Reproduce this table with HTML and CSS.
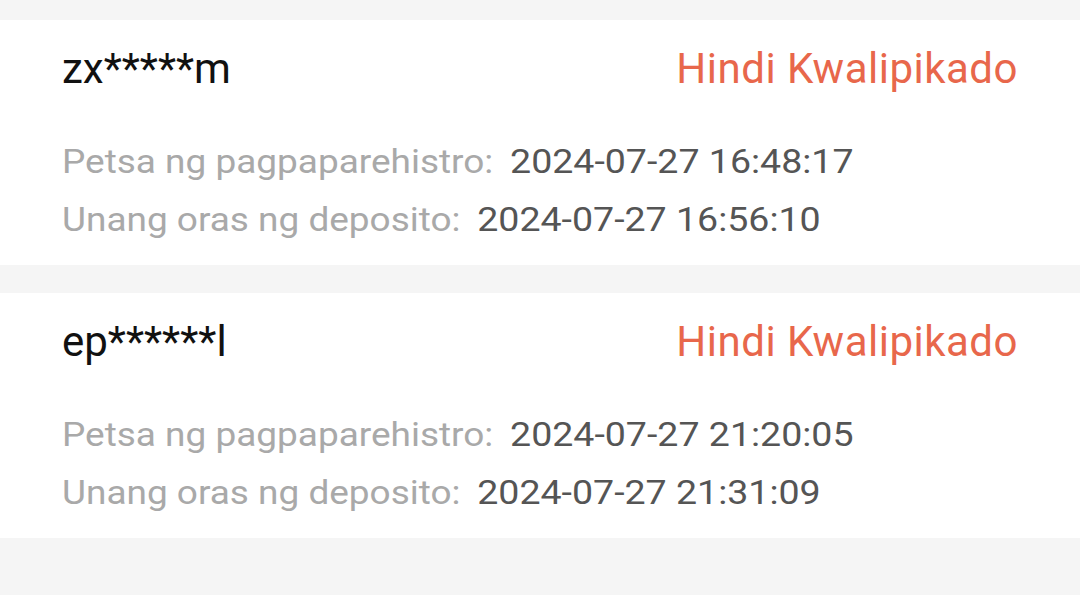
FILE: index.html
```html
<!DOCTYPE html>
<html>
<head>
<meta charset="utf-8">
<link rel="stylesheet" href="styles.css">
</head>
<body>
<div class="list">
  <div class="card">
    <div class="head">
      <span class="name">zx*****m</span>
      <span class="status">Hindi Kwalipikado</span>
    </div>
    <div class="row"><span class="label">Petsa ng pagpaparehistro:</span><span class="value">2024-07-27 16:48:17</span></div>
    <div class="row"><span class="label">Unang oras ng deposito:</span><span class="value">2024-07-27 16:56:10</span></div>
  </div>
  <div class="card">
    <div class="head">
      <span class="name">ep******l</span>
      <span class="status">Hindi Kwalipikado</span>
    </div>
    <div class="row"><span class="label">Petsa ng pagpaparehistro:</span><span class="value">2024-07-27 21:20:05</span></div>
    <div class="row"><span class="label">Unang oras ng deposito:</span><span class="value">2024-07-27 21:31:09</span></div>
  </div>
</div>
</body>
</html>
```
FILE: styles.css
```css
html, body {
  margin: 0;
  padding: 0;
  background: #f5f5f5;
}
body {
  width: 1080px;
  height: 595px;
  overflow: hidden;
  font-family: Roboto, "Liberation Sans", sans-serif;
}
.list {
  display: flex;
  flex-direction: column;
  gap: 28px;
  padding-top: 20px;
}
.card {
  background: #fff;
  height: 245px;
  box-sizing: border-box;
  padding: 25px 62px 0 62px;
}
.head {
  display: flex;
  justify-content: space-between;
  align-items: baseline;
  height: 48px;
  line-height: 48px;
  margin-bottom: 40px;
}
.name {
  font-family: Roboto, "Noto Sans", sans-serif;
  font-size: 42px;
  color: #111;
}
.status {
  font-size: 42px;
  letter-spacing: 0.5px;
  color: #e8674b;
}
.row {
  height: 58px;
  line-height: 58px;
  white-space: nowrap;
  transform: scaleX(1.12);
  transform-origin: left center;
}
.label {
  font-size: 33px;
  color: #a9a9a9;
  margin-right: 15px;
}
.value {
  font-size: 33.5px;
  color: #555;
}
```
